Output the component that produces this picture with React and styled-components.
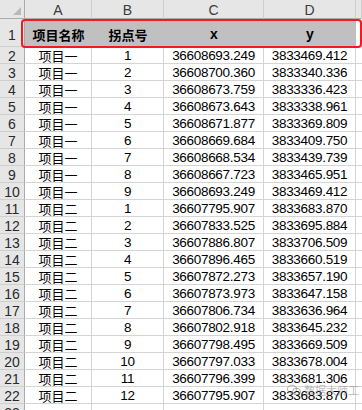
import React from 'react';
import styled, { createGlobalStyle } from 'styled-components';

const Global = createGlobalStyle`
    html, body { margin: 0; padding: 0; background: #fff; }
    body { font-family: "Liberation Sans", "Noto Sans CJK SC", Arial, sans-serif; line-height: 1; }
`;

const Sheet = styled.div`
    position: relative;
    width: 362px;
    height: 410px;
    overflow: hidden;
    display: grid;
    grid-template-columns: 25px 67px 72px 100px 92px 1fr;
    grid-auto-rows: 17px;
    grid-template-rows: 19px 28px;
    background: #fff;
`;

const Corner = styled.div`
    background: #e6e6e6;
    border-right: 1px solid #ababab;
    border-bottom: 1px solid #ababab;
    position: relative;
    box-sizing: border-box;
    &::after {
        content: '';
        position: absolute;
        right: 3px; bottom: 3px;
        width: 0; height: 0;
        border-left: 8px solid transparent;
        border-bottom: 8px solid #b9b9b9;
    }
`;

const ColHead = styled.div`
    background: #e6e6e6;
    border-right: 1px solid #cfcfcf;
    border-bottom: 1px solid #ababab;
    box-sizing: border-box;
    color: #3c3c3c;
    font-size: 14px;
    line-height: 1;
    display: flex;
    align-items: center;
    justify-content: center;
    padding-top: 1px;
`;

const RowHead = styled.div`
    background: #e6e6e6;
    border-right: 1px solid #ababab;
    border-bottom: 1px solid #cfcfcf;
    box-sizing: border-box;
    color: #2a2a2a;
    font-size: 14px;
    line-height: 1;
    display: flex;
    align-items: center;
    justify-content: center;
    overflow: hidden;
    padding-top: ${p => (p.$tall ? '4px' : '1px')};
`;

const Cell = styled.div`
    border-right: 1px solid #d4d4d4;
    border-bottom: 1px solid #d4d4d4;
    box-sizing: border-box;
    display: flex;
    align-items: center;
    justify-content: center;
    white-space: nowrap;
    overflow: hidden;
    line-height: 1;
    color: #000;
    font-size: ${p => (p.$cjk ? '13px' : '13.5px')};
    letter-spacing: ${p => (p.$cjk ? '0' : '-0.3px')};
    font-family: ${p => (p.$cjk
        ? '"Noto Sans CJK SC", sans-serif'
        : '"Liberation Sans", Arial, sans-serif')};
    padding-top: 1px;
`;

const TitleCell = styled.div`
    background: #c0c0c0;
    border-bottom: 1px solid #a6a6a6;
    box-sizing: border-box;
    display: flex;
    align-items: center;
    justify-content: center;
    line-height: 1;
    font-weight: bold;
    font-size: ${p => (p.$cjk ? '13px' : '14px')};
    font-family: ${p => (p.$cjk
        ? '"Noto Sans CJK SC", sans-serif'
        : '"Liberation Sans", Arial, sans-serif')};
    color: #000;
    padding-top: 3px;
`;

const BlankCell = styled.div`
    border-bottom: 1px solid #d4d4d4;
    box-sizing: border-box;
`;

const Highlight = styled.div`
    position: absolute;
    left: 21px;
    top: 19px;
    width: 341px;
    height: 29px;
    box-sizing: border-box;
    border: 2.5px solid #f21b1f;
    border-radius: 4px;
    pointer-events: none;
`;

const Watermark = styled.div`
    position: absolute;
    left: 287px;
    top: 384px;
    display: flex;
    align-items: center;
    gap: 3px;
    line-height: 1;
    color: rgba(120, 120, 120, 0.5);
    font-size: 11px;
    font-family: "Noto Sans CJK SC", sans-serif;
`;

const rows = [
    ['项目一', 1, '36608693.249', '3833469.412'],
    ['项目一', 2, '36608700.360', '3833340.336'],
    ['项目一', 3, '36608673.759', '3833336.423'],
    ['项目一', 4, '36608673.643', '3833338.961'],
    ['项目一', 5, '36608671.877', '3833369.809'],
    ['项目一', 6, '36608669.684', '3833409.750'],
    ['项目一', 7, '36608668.534', '3833439.739'],
    ['项目一', 8, '36608667.723', '3833465.951'],
    ['项目一', 9, '36608693.249', '3833469.412'],
    ['项目二', 1, '36607795.907', '3833683.870'],
    ['项目二', 2, '36607833.525', '3833695.884'],
    ['项目二', 3, '36607886.807', '3833706.509'],
    ['项目二', 4, '36607896.465', '3833660.519'],
    ['项目二', 5, '36607872.273', '3833657.190'],
    ['项目二', 6, '36607873.973', '3833647.158'],
    ['项目二', 7, '36607806.734', '3833636.964'],
    ['项目二', 8, '36607802.918', '3833645.232'],
    ['项目二', 9, '36607798.495', '3833669.509'],
    ['项目二', 10, '36607797.033', '3833678.004'],
    ['项目二', 11, '36607796.399', '3833681.306'],
    ['项目二', 12, '36607795.907', '3833683.870'],
];

export default function App() {
    return (
        <>
            <Global />
            <Sheet>
                <Corner />
                {['A', 'B', 'C', 'D', ''].map((c, i) => <ColHead key={i}>{c}</ColHead>)}

                <RowHead $tall>1</RowHead>
                <TitleCell $cjk>项目名称</TitleCell>
                <TitleCell $cjk>拐点号</TitleCell>
                <TitleCell>x</TitleCell>
                <TitleCell>y</TitleCell>
                <BlankCell />

                {rows.map((r, i) => (
                    <React.Fragment key={i}>
                        <RowHead>{i + 2}</RowHead>
                        <Cell $cjk>{r[0]}</Cell>
                        <Cell>{r[1]}</Cell>
                        <Cell>{r[2]}</Cell>
                        <Cell>{r[3]}</Cell>
                        <BlankCell />
                    </React.Fragment>
                ))}
                <RowHead>23</RowHead>
                <Cell /><Cell /><Cell /><Cell /><BlankCell />

                <Highlight />
                <Watermark>
                    <svg width="14" height="12" viewBox="0 0 14 12">
                        <ellipse cx="5" cy="5" rx="4.5" ry="3.8" fill="none" stroke="rgba(120,120,120,0.6)" strokeWidth="1" />
                        <ellipse cx="9.5" cy="7.5" rx="4" ry="3.3" fill="none" stroke="rgba(120,120,120,0.6)" strokeWidth="1" />
                    </svg>
                    <span>数据大师工</span>
                </Watermark>
            </Sheet>
        </>
    );
}
